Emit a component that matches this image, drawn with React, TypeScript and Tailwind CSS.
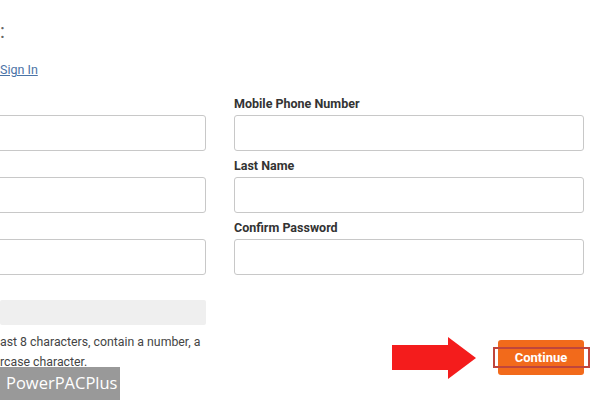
import React from "react";

function Field({ label }: { label: string }) {
  return (
    <div className="flex flex-col">
      <div className="h-[16px] mb-[3px] text-[12.5px] leading-[16px] font-bold text-[#333333] whitespace-nowrap">{label}</div>
      <div className="h-[36px] rounded-[3px] border border-[#c8c8c8] bg-white"></div>
    </div>
  );
}

export default function App() {
  return (
    <div className="relative w-[600px] h-[400px] overflow-hidden bg-white font-['Roboto',sans-serif]">
      <div className="pt-[19px] h-[44px] text-[20px] leading-[24px] text-[#666666]">:</div>
      <div className="mt-[18px] h-[16px] text-[12.5px] leading-[16px]">
        <a className="text-[#4a73a6] underline">Sign In</a>
      </div>
      <div className="mt-[18px] ml-[-144px] grid grid-cols-[350px_350px] gap-x-[28px] gap-y-[7px]">
        <Field label="" />
        <Field label="Mobile Phone Number" />
        <Field label="" />
        <Field label="Last Name" />
        <Field label="" />
        <Field label="Confirm Password" />
      </div>
      <div className="mt-[25px] w-[206px] h-[25px] bg-[#efefef] rounded-[2px]"></div>
      <div className="mt-[7px] text-[12.3px] leading-[20px] text-[#444444] whitespace-nowrap">
        <div>ast 8 characters, contain a number, a</div>
        <div>rcase character.</div>
      </div>

      <div className="absolute left-[498px] top-[340px] w-[86px] h-[35px] rounded-[3px] bg-[#f26a1b] flex items-center justify-center text-white font-bold text-[13px]">
        Continue
      </div>
      <div className="absolute left-[493px] top-[347px] w-[97px] h-[21px] border-2 border-[#c0453c]"></div>

      <svg className="absolute left-[390px] top-[335px]" width="90" height="46" viewBox="0 0 90 46">
        <polygon points="2,10 58,10 58,2 86,23 58,44 58,35 2,35" fill="#f41c1c" />
      </svg>

      <div className="absolute left-0 top-[367px] w-[120px] h-[33px] bg-[#999999] flex items-center pl-[6px] text-white text-[16.5px] font-['Open_Sans',sans-serif]">
        PowerPACPlus
      </div>
    </div>
  );
}
